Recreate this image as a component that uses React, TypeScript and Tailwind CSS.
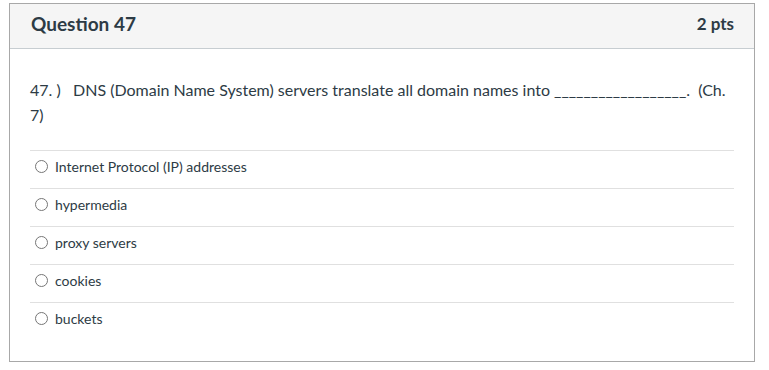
const options = [
  'Internet Protocol (IP) addresses',
  'hypermedia',
  'proxy servers',
  'cookies',
  'buckets',
];

export default function App() {
  return (
    <div className="min-h-screen bg-white pt-[3px] pl-[9px] font-['Lato','Liberation_Sans',sans-serif] text-[#2d3b45]">
      <div className="w-[746px] border border-[#a8a8a8] bg-white">
        {/* Header */}
        <div className="flex h-[45px] items-center justify-between border-b border-[#c7cdd1] bg-[#f5f5f5] pb-[5px] pl-[21px] pr-[20px]">
          <h2 className="text-[19px] font-bold leading-none">Question 47</h2>
          <span className="text-[17px] font-bold leading-none">2 pts</span>
        </div>

        {/* Body */}
        <div className="px-[20px] pt-[28px] pb-[21px]">
          <p className="mb-[23px] text-[16px] leading-[25px]">
            {'47. )\u00a0\u00a0 DNS (Domain Name System) servers translate all domain names into __________________.\u00a0 (Ch. 7)'}
          </p>

          <div>
            {options.map((opt) => (
              <label
                key={opt}
                className="flex h-[38px] items-center gap-[7px] border-t border-[#e0e0e0] pb-[6px] pl-[5px] text-[14px]"
              >
                <span className="h-[13px] w-[13px] rounded-full border border-[#767676] bg-white" />
                <span>{opt}</span>
              </label>
            ))}
          </div>
        </div>
      </div>
    </div>
  );
}
